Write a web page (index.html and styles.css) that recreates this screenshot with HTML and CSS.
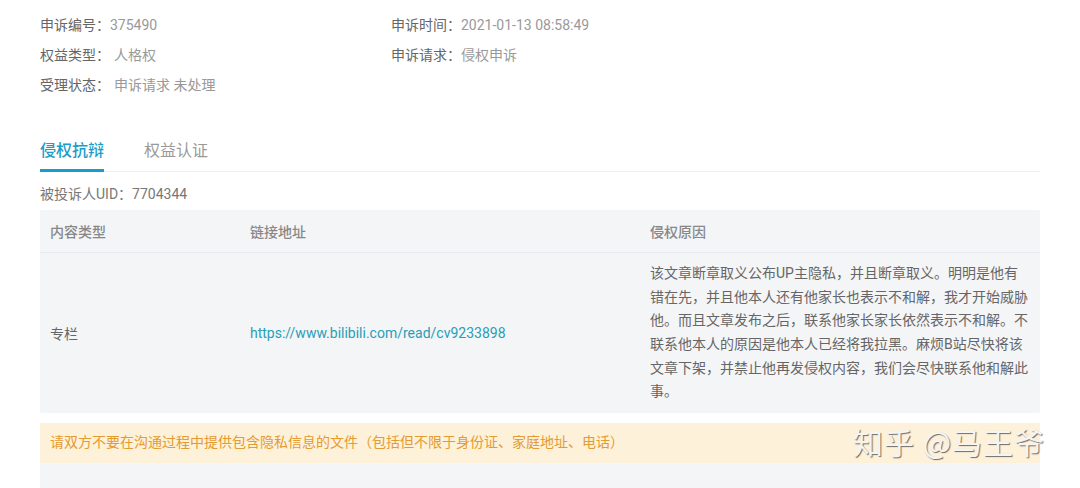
FILE: index.html
```html
<!DOCTYPE html>
<html lang="zh-CN">
<head>
<meta charset="utf-8">
<link rel="stylesheet" href="styles.css">
</head>
<body>
<div class="page">
  <div class="info">
    <div class="row"><span class="label">申诉编号：</span><span class="value">375490</span></div>
    <div class="row"><span class="label">申诉时间：</span><span class="value">2021-01-13 08:58:49</span></div>
    <div class="row"><span class="label">权益类型：</span><span class="value spaced">人格权</span></div>
    <div class="row"><span class="label">申诉请求：</span><span class="value">侵权申诉</span></div>
    <div class="row"><span class="label">受理状态：</span><span class="value spaced">申诉请求 未处理</span></div>
  </div>

  <div class="tabs">
    <div class="tab active">侵权抗辩</div>
    <div class="tab">权益认证</div>
  </div>

  <div class="uid">被投诉人UID：7704344</div>

  <div class="table">
    <div class="thead">
      <div class="cell c1">内容类型</div>
      <div class="cell c2">链接地址</div>
      <div class="cell c3">侵权原因</div>
    </div>
    <div class="tbody">
      <div class="cell c1">专栏</div>
      <div class="cell c2"><span class="link">https://www.bilibili.com/read/cv9233898</span></div>
      <div class="cell c3 reason">该文章断章取义公布UP主隐私，并且断章取义。明明是他有错在先，并且他本人还有他家长也表示不和解，我才开始威胁他。而且文章发布之后，联系他家长家长依然表示不和解。不联系他本人的原因是他本人已经将我拉黑。麻烦B站尽快将该文章下架，并禁止他再发侵权内容，我们会尽快联系他和解此事。</div>
    </div>
  </div>

  <div class="notice">请双方不要在沟通过程中提供包含隐私信息的文件（包括但不限于身份证、家庭地址、电话）</div>
  <div class="chat"></div>
</div>
<div class="watermark">知乎 @马王爷</div>
</body>
</html>
```

FILE: styles.css
```css
html, body {
  margin: 0;
  padding: 0;
  background: #fff;
  font-family: Roboto, "Noto Sans CJK SC", sans-serif;
  font-size: 14px;
  color: #666;
  overflow: hidden;
}
.page {
  width: 1000px;
  margin-left: 40px;
  padding-top: 10px;
}
.info {
  display: grid;
  grid-template-columns: 351px 1fr;
}
.row {
  height: 30px;
  line-height: 30px;
  white-space: nowrap;
}
.label { color: #666; }
.value { color: #999; }
.value.spaced { margin-left: 4px; }
.tabs {
  margin-top: 31px;
  display: flex;
  gap: 40px;
  border-bottom: 1px solid #eceef1;
}
.tab {
  height: 40px;
  line-height: 40px;
  font-size: 16px;
  color: #999;
  box-sizing: border-box;
}
.tab.active {
  color: #1a9ec8;
  font-weight: 500;
  border-bottom: 3px solid #1a9ec8;
  line-height: 40px;
  margin-bottom: -1px;
  height: 41px;
}
.uid {
  padding-top: 10px;
  line-height: 24px;
  color: #777;
  margin-bottom: 4px;
}
.table {
  background: #f4f5f7;
  border-radius: 2px;
}
.thead, .tbody {
  display: grid;
  grid-template-columns: 200px 400px 400px;
}
.thead {
  height: 42px;
  border-bottom: 1px solid #eaebee;
  align-items: center;
  color: #888;
  font-weight: 500;
}
.cell {
  padding: 0 10px;
}
.tbody {
  height: 160px;
  align-items: center;
  color: #666;
}
.link { color: #2a9db6; }
.reason {
  line-height: 23.6px;
  padding-right: 10px;
}
.notice {
  margin-top: 10px;
  height: 40px;
  line-height: 39px;
  background: #fdf1d9;
  color: #e59a32;
  padding-left: 10px;
}
.chat {
  height: 30px;
  background: #f4f5f7;
}
.watermark {
  position: absolute;
  left: 853px;
  top: 423px;
  font-size: 30px;
  line-height: 36px;
  font-family: "Noto Sans CJK SC", sans-serif;
  color: #f4f4f4;
  text-shadow: 1px 1px 1px rgba(0,0,0,0.55);
  letter-spacing: 1px;
  white-space: nowrap;
}
```
